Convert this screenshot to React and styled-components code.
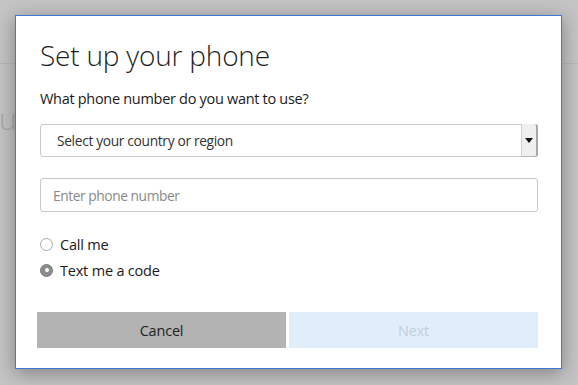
import React from "react";
import styled, { createGlobalStyle } from "styled-components";

const Global = createGlobalStyle`
  html, body { margin: 0; padding: 0; }
  body {
    background: #c4c4c4;
    font-family: "Open Sans", "Liberation Sans", sans-serif;
    width: 578px;
    height: 385px;
    overflow: hidden;
  }
`;

const Stage = styled.div`
  position: relative;
  width: 578px;
  height: 385px;
  overflow: hidden;
  background: #c4c4c4;
`;

const BackHeader = styled.div`
  height: 63px;
  border-bottom: 1px solid #b8b8b8;
`;

const BackHeading = styled.div`
  padding: 40px 0 0 0;
  margin-left: -1px;
  font-size: 30px;
  font-weight: 300;
  color: #a8a8a8;
  line-height: 1;
`;

const Dialog = styled.div`
  position: absolute;
  left: 15px;
  top: 15px;
  width: 547px;
  height: 354px;
  box-sizing: border-box;
  background: #fff;
  border: 1px solid #3b78d8;
  box-shadow: 0 4px 18px rgba(0, 0, 0, 0.35);
  padding: 20px 23px 0 24px;
  display: flex;
  flex-direction: column;
`;

const Title = styled.h1`
  margin: 0;
  font-size: 28px;
  font-weight: 300;
  line-height: 38px;
  color: #1f1f1f;
  letter-spacing: -0.2px;
`;

const Question = styled.p`
  margin: 15px 0 0 0;
  font-size: 14.5px;
  line-height: 20px;
  letter-spacing: -0.3px;
  color: #1a1a1a;
`;

const SelectBox = styled.div`
  margin-top: 15px;
  height: 33px;
  box-sizing: border-box;
  border: 1px solid #c8c8c8;
  border-radius: 3px;
  display: flex;
  align-items: stretch;
`;

const SelectText = styled.div`
  flex: 1;
  display: flex;
  align-items: center;
  padding-left: 16px;
  font-size: 13.8px;
  letter-spacing: -0.35px;
  color: #333;
`;

const ArrowButton = styled.div`
  width: 14px;
  background: #efefef;
  border-left: 1px solid #d0d0d0;
  border-right: 2px solid #a8a8a8;
  border-bottom: 1px solid #b8b8b8;
  border-radius: 0 3px 3px 0;
  display: flex;
  align-items: center;
  justify-content: center;
  margin: -1px -1px -1px 0;
`;

const Input = styled.input`
  margin-top: 21px;
  height: 34px;
  box-sizing: border-box;
  border: 1px solid #c8c8c8;
  border-radius: 3px;
  padding: 0 12px;
  font-family: "Open Sans", "Liberation Sans", sans-serif;
  font-size: 13.8px;
  letter-spacing: -0.45px;
  color: #333;
  outline: none;
  &::placeholder { color: #8a8a8a; }
`;

const RadioGroup = styled.div`
  margin-top: 22px;
  display: flex;
  flex-direction: column;
  gap: 6px;
`;

const RadioRow = styled.label`
  display: flex;
  align-items: center;
  gap: 7px;
  height: 20px;
  font-size: 14.5px;
  letter-spacing: -0.2px;
  color: #1a1a1a;
`;

const RadioCircle = styled.span`
  width: 13px;
  height: 13px;
  box-sizing: border-box;
  border-radius: 50%;
  border: 1px solid ${(p) => (p.checked ? "#7a7a7a" : "#a8a8a8")};
  background: ${(p) => (p.checked ? "#8c8c8c" : "#fff")};
  display: flex;
  align-items: center;
  justify-content: center;
  &::after {
    content: "";
    width: 4px;
    height: 4px;
    border-radius: 50%;
    background: #fff;
    display: ${(p) => (p.checked ? "block" : "none")};
  }
`;

const Buttons = styled.div`
  margin: auto 0 20px -3px;
  display: flex;
  gap: 3px;
`;

const Button = styled.button`
  flex: 1;
  height: 36px;
  border: none;
  font-family: "Open Sans", "Liberation Sans", sans-serif;
  font-size: 14.5px;
  letter-spacing: -0.2px;
  background: ${(p) => (p.primary ? "#e0edfa" : "#b3b3b3")};
  color: ${(p) => (p.primary ? "#c4ced9" : "#222")};
`;

export default function App() {
  return (
    <>
      <Global />
      <Stage>
        <BackHeader />
        <BackHeading>u</BackHeading>
        <Dialog>
          <Title>Set up your phone</Title>
          <Question>What phone number do you want to use?</Question>
          <SelectBox>
            <SelectText>Select your country or region</SelectText>
            <ArrowButton>
              <svg width="8" height="5" viewBox="0 0 8 5">
                <path d="M0 0 H8 L4 5 Z" fill="#111" />
              </svg>
            </ArrowButton>
          </SelectBox>
          <Input placeholder="Enter phone number" />
          <RadioGroup>
            <RadioRow>
              <RadioCircle />
              Call me
            </RadioRow>
            <RadioRow>
              <RadioCircle checked />
              Text me a code
            </RadioRow>
          </RadioGroup>
          <Buttons>
            <Button>Cancel</Button>
            <Button primary>Next</Button>
          </Buttons>
        </Dialog>
      </Stage>
    </>
  );
}
